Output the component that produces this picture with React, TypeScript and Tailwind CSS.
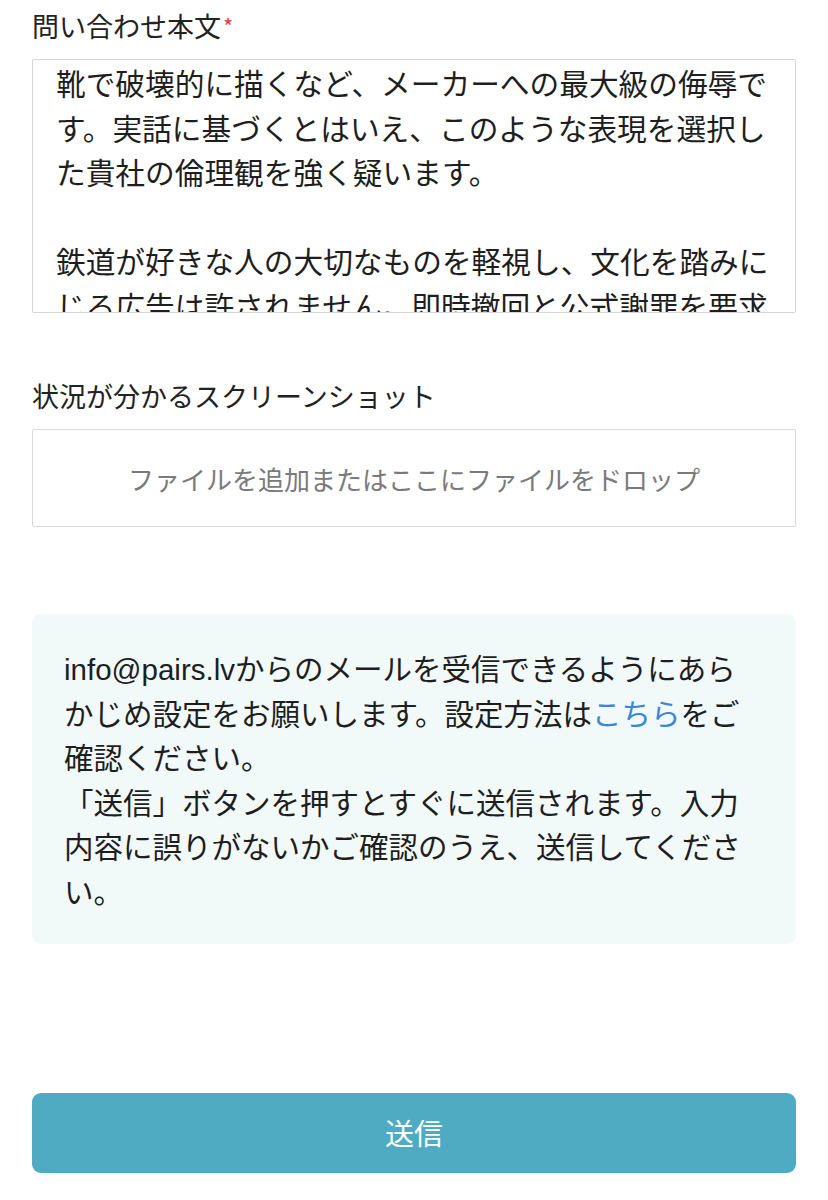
const bodyLines = [
  "靴で破壊的に描くなど、メーカーへの最大級の侮辱で",
  "す。実話に基づくとはいえ、このような表現を選択し",
  "た貴社の倫理観を強く疑います。",
  "",
  "鉄道が好きな人の大切なものを軽視し、文化を踏みに",
  "じる広告は許されません。即時撤回と公式謝罪を要求",
];

function FieldLabel({ text, required }: { text: string; required?: boolean }) {
  return (
    <div className="h-[40px] flex items-center text-[27px] text-[#222]">
      {text}
      {required && <span className="text-[#e0443a] text-[22px] self-start mt-[3px] ml-[2px]">*</span>}
    </div>
  );
}

export default function App() {
  return (
    <div
      className="w-[828px] h-[1200px] bg-white px-[32px] pt-[6px] overflow-hidden"
      style={{ fontFamily: '"Noto Sans CJK JP", "Noto Sans", sans-serif' }}
    >
      <FieldLabel text="問い合わせ本文" required />

      {/* message body, scrolled part-way through */}
      <div className="mt-[13px] h-[254px] border border-[#d6d6d6] rounded-[2px] overflow-hidden pl-[23px] pt-[1px] text-[29.7px] leading-[44.5px] text-[#1e1e1e] whitespace-nowrap">
        {bodyLines.map((line, i) => (
          <div key={i} className="h-[44.5px]">
            {line}
          </div>
        ))}
      </div>

      <div className="mt-[63px]">
        <FieldLabel text="状況が分かるスクリーンショット" />
      </div>

      <div className="mt-[13px] h-[98px] border border-[#d9d9d9] rounded-[2px] flex items-center justify-center text-[26px] text-[#7a7a7a]">
        ファイルを追加またはここにファイルをドロップ
      </div>

      {/* notice */}
      <div className="mt-[87px] bg-[#f1f9f9] rounded-[9px] pl-[32px] pr-[20px] pt-[31px] pb-[32px] text-[29.5px] leading-[44.5px] text-[#1e1e1e] whitespace-nowrap">
        <div className="h-[44.5px] overflow-hidden">
          <span style={{ fontFamily: '"Liberation Sans", sans-serif' }}>info@pairs.lv</span>
          からのメールを受信できるようにあら
        </div>
        <div className="h-[44.5px]">
          かじめ設定をお願いします。設定方法は<a className="text-[#3a86d9]">こちら</a>をご
        </div>
        <div className="h-[44.5px]">確認ください。</div>
        <div className="h-[44.5px]">「送信」ボタンを押すとすぐに送信されます。入力</div>
        <div className="h-[44.5px]">内容に誤りがないかご確認のうえ、送信してくださ</div>
        <div className="h-[44.5px]">い。</div>
      </div>

      <button className="mt-[149px] w-full h-[80px] rounded-[9px] bg-[#4eabc1] text-white text-[29px] flex items-center justify-center">
        送信
      </button>
    </div>
  );
}
